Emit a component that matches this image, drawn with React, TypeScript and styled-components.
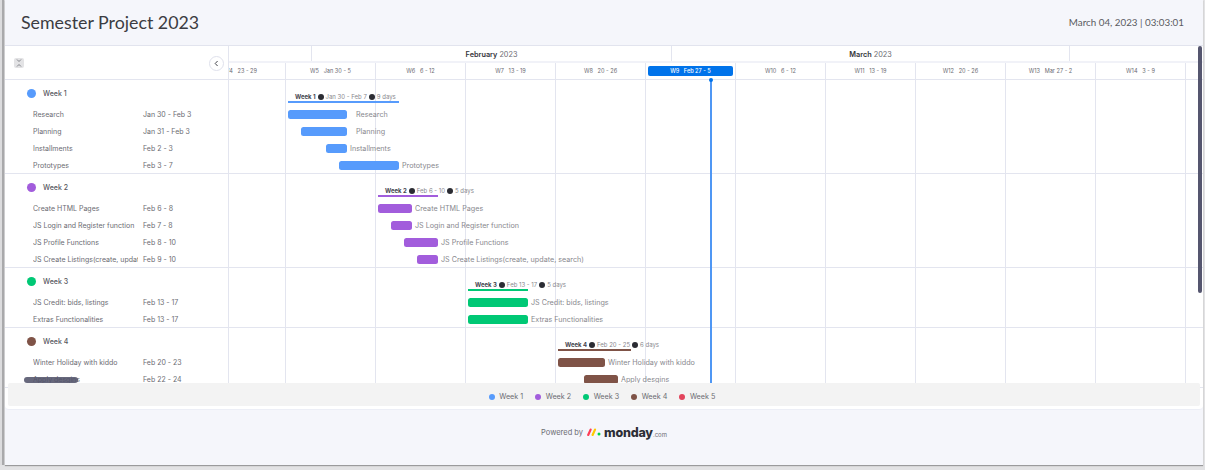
import styled, { createGlobalStyle } from "styled-components";

const GlobalStyle = createGlobalStyle`
  html, body {
    margin: 0;
    padding: 0;
    height: 470px;
    overflow: hidden;
    background: #e4e4e6;
  }
  * {
    box-sizing: border-box;
  }
`;

const FONT = `"Inter", "Noto Sans", sans-serif`;
const BLUE = "#579bfc";
const PURPLE = "#a25ddc";
const GREEN = "#00c875";
const BROWN = "#7f5347";
const RED = "#e2445c";
const LINE = "#e3e5ef";
const TEXT = "#6b6b72";

const Window = styled.div`
  width: 1205px;
  height: 470px;
  padding: 0 2px 5px 0;
  font-family: ${FONT};
  display: flex;
  background: #e2e2e4;
  opacity: 0.999;
`;
const Edge = styled.div`
  width: 5px;
  flex: none;
  background: linear-gradient(90deg, #dcdcde 0 2px, #a9a9ab 2px 4px, #d8d8da 4px);
`;
const Page = styled.div`
  flex: 1;
  min-width: 0;
  display: flex;
  flex-direction: column;
  background: #f5f6fb;
  box-shadow: 0 1px 1px #9a9a9c;
`;
const Header = styled.header`
  height: 46px;
  flex: none;
  display: flex;
  align-items: center;
  justify-content: space-between;
  padding: 0 19px 1px 16px;
  border-bottom: 1px solid #e2e4ee;
`;
const Title = styled.h1`
  margin: 0;
  font-family: "Lato", sans-serif;
  font-size: 17.8px;
  font-weight: 400;
  color: #3b3c42;
`;
const Clock = styled.div`
  font-family: "Lato", sans-serif;
  font-size: 9.8px;
  color: #5a5b61;
`;
const Panel = styled.div`
  position: relative;
  height: 364px;
  flex: none;
  background: #fff;
  border-bottom: 1px solid #eceef6;
  border-radius: 0 0 4px 4px;
  overflow: hidden;
`;
const TopRow = styled.div`
  display: flex;
  height: 34px;
  border-bottom: 1px solid ${LINE};
`;
const PaneHead = styled.div`
  width: 224px;
  flex: none;
  display: flex;
  align-items: center;
  justify-content: space-between;
  padding: 1px 4px 0 9px;
  border-right: 1px solid ${LINE};
`;
const CollapseAll = styled.div`
  width: 10px;
  height: 10px;
  display: flex;
  border-radius: 2px;
  background: #e3e3e5;
`;
const BackButton = styled.div`
  width: 15px;
  height: 15px;
  display: flex;
  align-items: center;
  justify-content: center;
  border-radius: 50%;
  border: 1px solid #dfe1ec;
  background: #fff;
`;
const Scale = styled.div`
  flex: 1;
  min-width: 0;
  display: flex;
  flex-direction: column;
`;
const Months = styled.div`
  display: flex;
  height: 17px;
  border-bottom: 2px solid #f1f2f8;
`;
const Month = styled.div<{ $w: number; $open?: boolean }>`
  width: ${(p) => p.$w}px;
  flex: none;
  display: flex;
  align-items: center;
  justify-content: center;
  padding-top: 2px;
  font-size: 7.3px;
  color: ${TEXT};
  border-right: ${(p) => (p.$open ? "none" : `1px solid ${LINE}`)};
  b {
    color: #35363c;
    font-weight: 600;
    margin-right: 2px;
  }
`;
const Weeks = styled.div`
  display: flex;
  flex: 1;
`;
const WeekCell = styled.div<{ $w: number; $first?: boolean }>`
  width: ${(p) => p.$w}px;
  flex: none;
  display: flex;
  align-items: center;
  justify-content: ${(p) => (p.$first ? "flex-end" : "center")};
  padding-right: ${(p) => (p.$first ? "28px" : "0")};
  overflow: hidden;
  white-space: pre;
  font-size: 5.6px;
  color: ${TEXT};
  border-right: 1px solid ${LINE};
`;
const TodayChip = styled.div`
  flex: 1;
  height: 10px;
  margin: 0 2px;
  display: flex;
  align-items: center;
  justify-content: center;
  white-space: pre;
  border-radius: 2px;
  background: #0073ea;
  color: #fff;
  font-size: 5.6px;
  font-weight: 500;
`;
const Group = styled.section`
  box-shadow: inset 0 -1px 0 ${LINE};
`;
const Row = styled.div<{ $head?: boolean }>`
  display: flex;
  height: ${(p) => (p.$head ? "26px" : "17px")};
`;
const Pane = styled.div<{ $head?: boolean }>`
  width: 224px;
  flex: none;
  display: flex;
  align-items: ${(p) => (p.$head ? "flex-start" : "center")};
  padding: ${(p) => (p.$head ? "8.5px 0 0 22px" : "0 0 0 28px")};
  font-size: 7px;
  color: ${TEXT};
  border-right: 1px solid ${LINE};
`;
const Dot = styled.span<{ $c: string; $size: number }>`
  width: ${(p) => p.$size}px;
  height: ${(p) => p.$size}px;
  flex: none;
  border-radius: 50%;
  background: ${(p) => p.$c};
`;
const GroupName = styled.span`
  margin-left: 7px;
  font-size: 7px;
  line-height: 9px;
  font-weight: 500;
  color: #57575e;
`;
const TaskName = styled.span`
  width: 105px;
  flex: none;
  margin-right: 5px;
  overflow: hidden;
  white-space: nowrap;
`;
const Track = styled.div`
  position: relative;
  flex: 1;
  min-width: 0;
  display: flex;
  align-items: center;
  font-size: 7.2px;
  color: #88888e;
  white-space: nowrap;
`;
const GridLines = styled.div`
  position: absolute;
  inset: 0;
  background-image: linear-gradient(90deg, ${LINE} 1px, transparent 1px);
  background-size: 90px 100%;
  background-position: 56px 0;
`;
const Bar = styled.div<{ $c: string; $x: number; $w: number }>`
  position: relative;
  flex: none;
  height: 9px;
  margin-left: ${(p) => p.$x}px;
  width: ${(p) => p.$w}px;
  border-radius: 2.5px;
  background: ${(p) => p.$c};
`;
const BarLabel = styled.span<{ $gap: number }>`
  position: relative;
  margin-left: ${(p) => p.$gap}px;
`;
const Summary = styled.div<{ $c: string; $x: number; $w: number }>`
  position: relative;
  align-self: flex-end;
  margin: 0 0 3px ${(p) => p.$x}px;
  width: ${(p) => p.$w}px;
  padding: 0 0 0 7px;
  border-bottom: 2px solid ${(p) => p.$c};
  display: flex;
  align-items: center;
  gap: 2px;
  font-size: 6px;
  line-height: 8px;
  b {
    color: #46474f;
    font-weight: 700;
  }
  i {
    width: 6px;
    height: 6px;
    flex: none;
    border-radius: 50%;
    background: #2b2c33;
  }
`;
const TodayLine = styled.div`
  position: absolute;
  left: 705px;
  top: 33px;
  bottom: 20px;
  width: 2px;
  background: #4f97f4;
  &::before {
    content: "";
    position: absolute;
    top: -1px;
    left: -1px;
    width: 4px;
    height: 4px;
    border-radius: 50%;
    background: #0073ea;
  }
`;
const Scrollbar = styled.div`
  position: absolute;
  top: 0;
  right: 1px;
  width: 4px;
  height: 247px;
  border-radius: 2px;
  background: #55566f;
`;
const Redaction = styled.div`
  position: absolute;
  left: 19px;
  top: 331px;
  width: 54px;
  height: 6px;
  border-radius: 3px;
  background: #52536a;
  opacity: 0.88;
`;
const Legend = styled.div`
  position: absolute;
  left: 3px;
  right: 3px;
  bottom: 3px;
  height: 23px;
  padding: 4px 4px 0 0;
  display: flex;
  align-items: center;
  justify-content: center;
  gap: 12px;
  border-radius: 2px;
  background: #f3f3f3;
`;
const LegendItem = styled.div`
  display: flex;
  align-items: center;
  gap: 4.5px;
  font-size: 7.2px;
  color: ${TEXT};
`;
const Footer = styled.footer`
  flex: 1;
  display: flex;
  align-items: center;
  justify-content: center;
  gap: 4px;
  padding-bottom: 11px;
  font-size: 7.5px;
  color: ${TEXT};
`;
const Logo = styled.div`
  display: flex;
  align-items: baseline;
  margin-left: -1px;
  color: #2d2e36;
  font-size: 12.5px;
  font-weight: 800;
  letter-spacing: -0.2px;
  small {
    font-size: 6px;
    font-weight: 400;
    color: ${TEXT};
    letter-spacing: 0;
  }
`;

type Task = { name: string; dates: string; x: number; w: number; gap: number };
type WeekGroup = {
  name: string;
  color: string;
  x: number;
  w: number;
  range: string;
  days: string;
  tasks: Task[];
};

const groups: WeekGroup[] = [
  {
    name: "Week 1",
    color: BLUE,
    x: 59,
    w: 111,
    range: "Jan 30 - Feb 7",
    days: "9 days",
    tasks: [
      { name: "Research", dates: "Jan 30 - Feb 3", x: 59, w: 59, gap: 9 },
      { name: "Planning", dates: "Jan 31 - Feb 3", x: 72, w: 46, gap: 9 },
      { name: "Installments", dates: "Feb 2 - 3", x: 97, w: 21, gap: 3 },
      { name: "Prototypes", dates: "Feb 3 - 7", x: 110, w: 60, gap: 3 },
    ],
  },
  {
    name: "Week 2",
    color: PURPLE,
    x: 149,
    w: 60,
    range: "Feb 6 - 10",
    days: "5 days",
    tasks: [
      { name: "Create HTML Pages", dates: "Feb 6 - 8", x: 149, w: 34, gap: 3 },
      { name: "JS Login and Register function", dates: "Feb 7 - 8", x: 162, w: 21, gap: 3 },
      { name: "JS Profile Functions", dates: "Feb 8 - 10", x: 175, w: 34, gap: 3 },
      { name: "JS Create Listings(create, update, search)", dates: "Feb 9 - 10", x: 188, w: 21, gap: 3 },
    ],
  },
  {
    name: "Week 3",
    color: GREEN,
    x: 239,
    w: 60,
    range: "Feb 13 - 17",
    days: "5 days",
    tasks: [
      { name: "JS Credit: bids, listings", dates: "Feb 13 - 17", x: 239, w: 60, gap: 3 },
      { name: "Extras Functionalities", dates: "Feb 13 - 17", x: 239, w: 60, gap: 3 },
    ],
  },
  {
    name: "Week 4",
    color: BROWN,
    x: 329,
    w: 73,
    range: "Feb 20 - 25",
    days: "6 days",
    tasks: [
      { name: "Winter Holiday with kiddo", dates: "Feb 20 - 23", x: 329, w: 47, gap: 3 },
      { name: "Apply desgins", dates: "Feb 22 - 24", x: 355, w: 34, gap: 3 },
    ],
  },
];

const weeks = [
  "W5   Jan 30 - 5",
  "W6   6 - 12",
  "W7   13 - 19",
  "W8   20 - 26",
  "TODAY",
  "W10   6 - 12",
  "W11   13 - 19",
  "W12   20 - 26",
  "W13   Mar 27 - 2",
  "W14   3 - 9",
];

const legend = [
  { name: "Week 1", color: BLUE },
  { name: "Week 2", color: PURPLE },
  { name: "Week 3", color: GREEN },
  { name: "Week 4", color: BROWN },
  { name: "Week 5", color: RED },
];

export default function App() {
  return (
    <Window>
      <GlobalStyle />
      <Edge />
      <Page>
        <Header>
          <Title>Semester Project 2023</Title>
          <Clock>March 04, 2023 | 03:03:01</Clock>
        </Header>
        <Panel>
          <TopRow>
            <PaneHead>
              <CollapseAll>
                <svg width="10" height="10" viewBox="0 0 10 10" fill="none" stroke="#77787f" strokeWidth="0.9">
                  <path d="M3 1.5 5 3.5 7 1.5M3 8.5 5 6.5 7 8.5" />
                </svg>
              </CollapseAll>
              <BackButton>
                <svg width="7" height="7" viewBox="0 0 7 7" fill="none" stroke="#44454c" strokeWidth="1">
                  <path d="M4.6 1 2.2 3.5 4.6 6" />
                </svg>
              </BackButton>
            </PaneHead>
            <Scale>
              <Months>
                <Month $w={83} />
                <Month $w={360}>
                  <b>February</b> 2023
                </Month>
                <Month $w={398}>
                  <b>March</b> 2023
                </Month>
                <Month $w={120} $open />
              </Months>
              <Weeks>
                <WeekCell $w={57} $first>W4   23 - 29</WeekCell>
                {weeks.map((w) => (
                  <WeekCell key={w} $w={90}>
                    {w === "TODAY" ? <TodayChip>W9   Feb 27 - 5</TodayChip> : w}
                  </WeekCell>
                ))}
              </Weeks>
            </Scale>
          </TopRow>
          {groups.map((g) => (
            <Group key={g.name}>
              <Row $head>
                <Pane $head>
                  <Dot $c={g.color} $size={9} />
                  <GroupName>{g.name}</GroupName>
                </Pane>
                <Track>
                  <GridLines />
                  <Summary $c={g.color} $x={g.x} $w={g.w}>
                    <b>{g.name}</b>
                    <i />
                    {g.range}
                    <i />
                    {g.days}
                  </Summary>
                </Track>
              </Row>
              {g.tasks.map((t) => (
                <Row key={t.name}>
                  <Pane>
                    <TaskName>{t.name}</TaskName>
                    {t.dates}
                  </Pane>
                  <Track>
                    <GridLines />
                    <Bar $c={g.color} $x={t.x} $w={t.w} />
                    <BarLabel $gap={t.gap}>{t.name}</BarLabel>
                  </Track>
                </Row>
              ))}
            </Group>
          ))}
          <TodayLine />
          <Redaction />
          <Scrollbar />
          <Legend>
            {legend.map((l) => (
              <LegendItem key={l.name}>
                <Dot $c={l.color} $size={6} />
                {l.name}
              </LegendItem>
            ))}
          </Legend>
        </Panel>
        <Footer>
          Powered by
          <svg width="14" height="8" viewBox="0 0 14 8">
            <path d="M1.2 7 3.6 1.6" stroke="#ff3d57" strokeWidth="2.2" strokeLinecap="round" />
            <path d="M5.6 7 8 1.6" stroke="#ffcb00" strokeWidth="2.2" strokeLinecap="round" />
            <circle cx="12" cy="6" r="1.5" fill="#00d647" />
          </svg>
          <Logo>
            monday<small>.com</small>
          </Logo>
        </Footer>
      </Page>
    </Window>
  );
}
